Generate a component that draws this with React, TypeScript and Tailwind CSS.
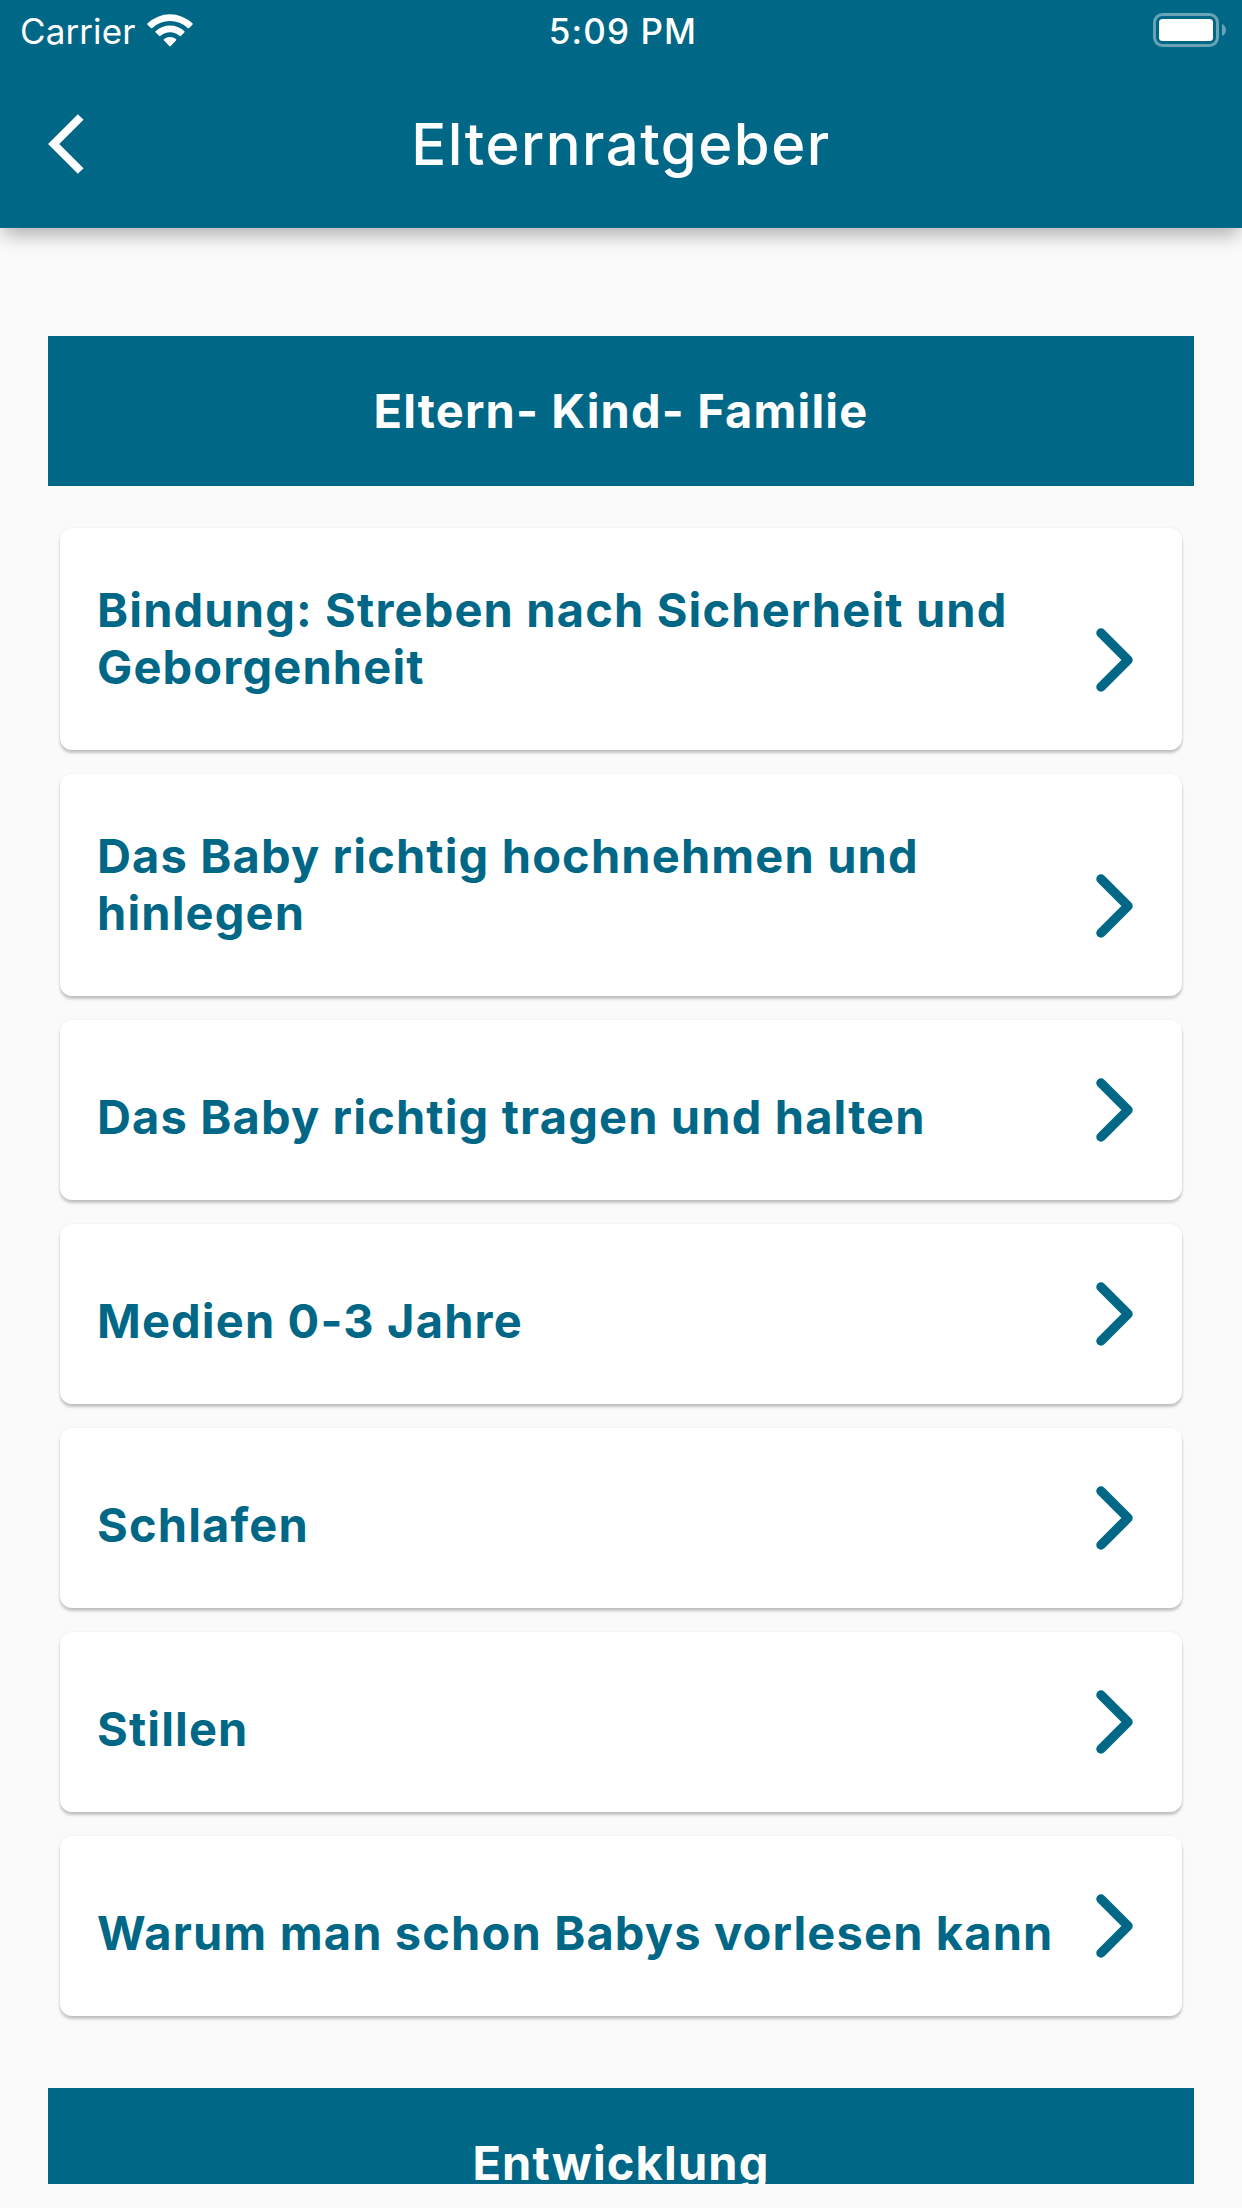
interface TitleProps {
    title: string;
}

const FamilyTopics = [
    'Bindung: Streben nach Sicherheit und Geborgenheit',
    'Das Baby richtig hochnehmen und hinlegen',
    'Das Baby richtig tragen und halten',
    'Medien 0-3 Jahre',
    'Schlafen',
    'Stillen',
    'Warum man schon Babys vorlesen kann',
];

function StatusBar() {
    return (
        <div className="grid h-[60px] grid-cols-3 items-center pl-5 pr-4 pt-[3px]">
            <div className="flex items-center gap-3">
                <span className="text-[35px] leading-[57px] tracking-[0.1px]">Carrier</span>

                <svg width="46" height="34" viewBox="149 12.5 46 34" fill="#fff" className="-mt-1">
                    <path d="M149.6 22.8a32.5 32.5 0 0 1 44.8 0q.7.7 0 1.4l-3.2 3.2q-.8.7-1.6 0a26 26 0 0 0-35.2 0q-.8.7-1.6 0l-3.2-3.2q-.7-.7 0-1.4z" />
                    <path d="M157.7 30.6a21 21 0 0 1 28.600 0q.7.7 0 1.4l-3.3 3.3q-.8.7-1.6 0a14.3 14.3 0 0 0-18.800 0q-.8.7-1.6 0l-3.3-3.3q-.7-.7 0-1.4z" />
                    <path d="M166 38.6a9.6 9.6 0 0 1 12 0q.7.7 0 1.4l-5.3 5.4q-.7.7-1.4 0l-5.3-5.4q-.7-.7 0-1.4z" />
                </svg>
            </div>

            <div className="text-center text-[35px] font-medium leading-[57px] tracking-[1.1px]">5:09 PM</div>

            <svg width="73" height="34" viewBox="0 0 73 34" className="-mt-[3px] justify-self-end">
                <rect x="1.5" y="1.5" width="63" height="31" rx="8" fill="none" stroke="#66a4b6" strokeWidth="3" />
                <rect x="6" y="6" width="54" height="22" rx="3.5" fill="#fff" />
                <path d="M69 11c5.300 2 5.300 10 0 12z" fill="#66a4b6" />
            </svg>
        </div>
    );
}

function SectionHeader({ title }: TitleProps) {
    return (
        <h2 className="flex h-[150px] items-center justify-center bg-[#006786] text-[47px] font-bold tracking-[1.15px] text-white">
            {title}
        </h2>
    );
}

function TopicCard({ title }: TitleProps) {
    return (
        <li className="flex items-end rounded-xl bg-white pb-[55px] pl-[37px] pr-[49px] pt-[53px] shadow-[0_3px_3px_rgba(0,0,0,0.22),0_0_3px_rgba(0,0,0,0.06)]">
            <span className="flex min-h-[72px] flex-1 items-end text-[47px] font-bold leading-[57px] tracking-[1.15px] text-[#006786]">
                {title}
            </span>

            <svg width="38" height="66" viewBox="0 0 38 66" fill="none" className="mb-0.5 shrink-0" stroke="#006786" strokeWidth="9.5" strokeLinecap="round" strokeLinejoin="round">
                <path d="M6 6l27 27L6 60" />
            </svg>
        </li>
    );
}

export default function App() {
    return (
        <div className="flex h-[2208px] w-[1242px] flex-col overflow-hidden bg-[#fafafa] pb-6 font-[Inter,sans-serif]">
            <header className="relative z-10 h-[228px] shrink-0 bg-[#006786] text-white shadow-[0_10px_18px_-3px_rgba(0,0,0,0.3)]">
                <StatusBar />

                <div className="grid h-[168px] grid-cols-[120px_1fr_120px] items-center">
                    <svg width="36" height="60" viewBox="48 114 36 60" fill="none" stroke="#fff" strokeWidth="8" className="ml-12">
                        <path d="M80.700 117L53.700 144l27 27" />
                    </svg>

                    <h1 className="text-center text-[58px] font-medium tracking-[1.5px]">Elternratgeber</h1>
                </div>
            </header>

            <main className="min-h-0 flex-1 overflow-hidden px-12 pt-[108px]">
                <SectionHeader title="Eltern- Kind- Familie" />

                <ul className="mb-[72px] mt-[42px] flex flex-col gap-6 px-3">
                    {FamilyTopics.map((topic) => (
                        <TopicCard key={topic} title={topic} />
                    ))}
                </ul>

                <SectionHeader title="Entwicklung" />
            </main>
        </div>
    );
}
